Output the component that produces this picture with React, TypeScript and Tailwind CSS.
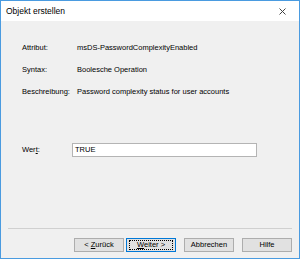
import React from 'react';

const font = { fontFamily: '"Liberation Sans", Arial, sans-serif' };

function Btn({ label, focused }: { label: React.ReactNode; focused?: boolean }) {
  return (
    <button
      className={
        'w-[50px] h-[14px] flex items-center justify-center text-[7.5px] leading-none text-black bg-[#e1e1e1] border ' +
        (focused ? 'border-[#0078d7]' : 'border-[#adadad]')
      }
    >
      {focused ? (
        <span className="w-[44px] h-[10px] flex items-center justify-center border border-dotted border-black">{label}</span>
      ) : (
        label
      )}
    </button>
  );
}

export default function App() {
  return (
    <div style={font} className="w-[300px] h-[259px] flex flex-col border border-[#4a9be0] bg-[#f0f0f0] text-black">
      <div className="h-[20px] shrink-0 bg-white flex items-center justify-between pl-[5px] pr-[13px]">
        <span className="text-[8.5px] leading-none">Objekt erstellen</span>
        <svg width="7" height="7" viewBox="0 0 7 7">
          <path d="M0.5 0.5 L6.5 6.5 M6.5 0.5 L0.5 6.5" stroke="#444" strokeWidth="1" />
        </svg>
      </div>
      <div className="flex-1 flex flex-col pl-[21px] pt-[22px] text-[7.5px] leading-[10px]">
        <div className="grid grid-cols-[55px_1fr] gap-y-[12px] whitespace-nowrap">
          <span>Attribut:</span>
          <span>msDS-PasswordComplexityEnabled</span>
          <span>Syntax:</span>
          <span>Boolesche Operation</span>
          <span>Beschreibung:</span>
          <span>Password complexity status for user accounts</span>
        </div>
        <div className="flex items-center mt-[46px]">
          <span className="w-[50px]">
            Wer<span className="underline">t</span>:
          </span>
          <div className="w-[185px] h-[14px] bg-white border border-[#b4b4b4] flex items-center px-[2px]">TRUE</div>
        </div>
      </div>
      <div className="mx-[7px] border-t border-[#d0d0d0]" />
      <div className="flex justify-end items-center gap-[8px] pr-[7px] pt-[9px] pb-[6px]">
        <div className="flex gap-[2px]">
          <Btn label={<>&lt;&nbsp;<span className="underline">Z</span>urück</>} />
          <Btn focused label={<><span className="underline">W</span>eiter&nbsp;&gt;</>} />
        </div>
        <Btn label="Abbrechen" />
        <Btn label="Hilfe" />
      </div>
    </div>
  );
}
